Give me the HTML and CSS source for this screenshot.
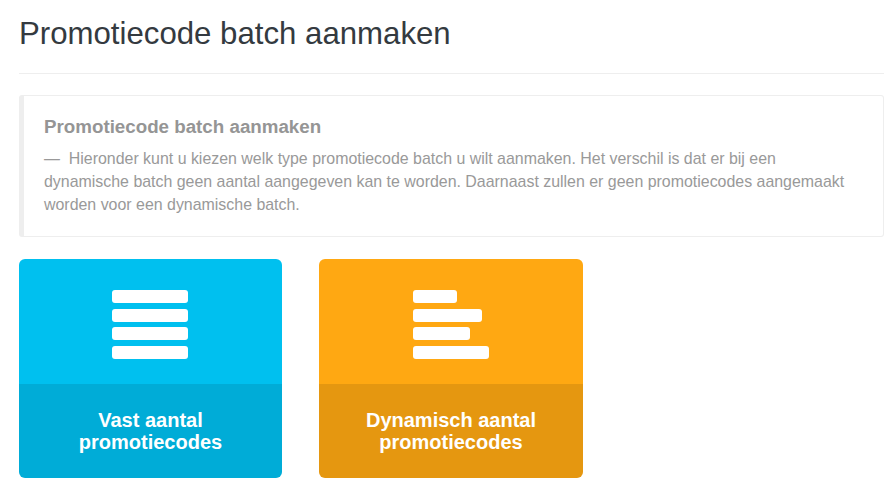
FILE: index.html
```html
<!DOCTYPE html>
<html lang="nl">
<head>
	<meta charset="UTF-8">
	<title>Promotiecode batch aanmaken</title>
	<link rel="stylesheet" href="styles.css">
</head>
<body>
<div class="wrapper">
	<h1 class="pageTitle">Promotiecode batch aanmaken</h1>

	<div class="callout">
		<h4 class="calloutTitle">Promotiecode batch aanmaken</h4>
		<p class="calloutText">—&nbsp; Hieronder kunt u kiezen welk type promotiecode batch u wilt aanmaken. Het verschil is dat er bij een<br>dynamische batch geen aantal aangegeven kan te worden. Daarnaast zullen er geen promotiecodes aangemaakt<br>worden voor een dynamische batch.</p>
	</div>

	<div class="cards">
		<a class="card cardBlue" href="#">
			<div class="cardIcon">
				<div class="bars">
					<span class="bar barFull"></span>
					<span class="bar barFull"></span>
					<span class="bar barFull"></span>
					<span class="bar barFull"></span>
				</div>
			</div>
			<div class="cardLabel">Vast aantal<br>promotiecodes</div>
		</a>
		<a class="card cardOrange" href="#">
			<div class="cardIcon">
				<div class="bars">
					<span class="bar barS"></span>
					<span class="bar barL"></span>
					<span class="bar barM"></span>
					<span class="bar barFull"></span>
				</div>
			</div>
			<div class="cardLabel">Dynamisch aantal<br>promotiecodes</div>
		</a>
	</div>
</div>
</body>
</html>
```
FILE: styles.css
```css
* {
	margin: 0;
	padding: 0;
	box-sizing: border-box;
}

body {
	background-color: #fff;
	font-family: "Liberation Sans", Arial, sans-serif;
	font-size: 14px;
	color: #333;
}

.wrapper {
	padding: 0 11px 0 19px;
}

.pageTitle {
	height: 74px;
	padding-top: 16px;
	font-size: 31.2px;
	font-weight: 400;
	line-height: 36px;
	color: #343a40;
	border-bottom: 1px solid #eee;
}

.callout {
	height: 142px;
	margin-top: 21px;
	padding: 21px 10px 0 20px;
	border: 1px solid #eee;
	border-left-width: 5px;
	border-radius: 3px;
}

.calloutTitle {
	font-size: 18.75px;
	font-weight: 700;
	line-height: 20px;
	color: #959595;
	margin-bottom: 10px;
}

.calloutText {
	font-size: 15.93px;
	line-height: 23px;
	color: #999;
}

.cards {
	display: grid;
	grid-template-columns: 263px 264px;
	column-gap: 37px;
	margin-top: 22px;
}

.card {
	display: block;
	height: 219px;
	border-radius: 6px;
	overflow: hidden;
	text-decoration: none;
	color: #fff;
}

.cardIcon {
	display: flex;
	justify-content: center;
	align-items: center;
	height: 125px;
	padding-top: 6px;
}

.cardBlue .cardIcon {
	background-color: #00c0ef;
	padding-right: 1px;
}

.cardBlue .cardLabel {
	background-color: #00acd7;
}

.cardOrange .cardIcon {
	background-color: #ffa812;
}

.cardOrange .cardLabel {
	background-color: #e59710;
}

.cardLabel {
	height: 94px;
	padding-top: 25px;
	font-size: 20px;
	font-weight: 700;
	line-height: 22px;
	text-align: center;
}

.bars {
	display: flex;
	flex-direction: column;
	gap: 5.67px;
	width: 76px;
}

.bar {
	display: block;
	height: 13px;
	background-color: #fff;
	border-radius: 3px;
}

.barS {
	width: 44px;
}

.barM {
	width: 57px;
}

.barL {
	width: 69px;
}

.barFull {
	width: 76px;
}
```
